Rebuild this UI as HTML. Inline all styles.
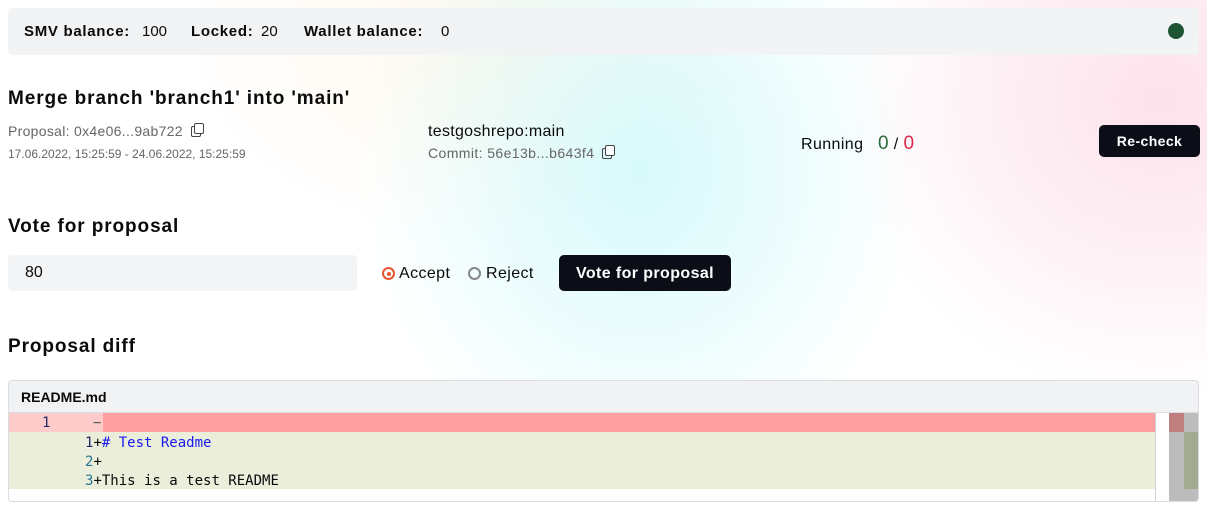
<!DOCTYPE html>
<html><head><style>
*{box-sizing:border-box;margin:0;padding:0}
body{width:1207px;height:513px;overflow:hidden;font-family:"Liberation Sans",sans-serif;color:#0a0a0a;position:relative;
background:
radial-gradient(ellipse 280px 320px at 640px 170px, rgba(205,248,250,0.8), rgba(255,255,255,0) 100%),
radial-gradient(ellipse 320px 300px at 1160px 100px, rgba(252,218,230,0.8), rgba(255,255,255,0) 100%),
radial-gradient(ellipse 300px 200px at 480px 40px, rgba(255,242,220,0.5), rgba(255,255,255,0) 100%),
#fff;}
.abs{position:absolute;white-space:nowrap}
.bar{left:8px;top:8px;width:1191px;height:47px;background:#f2f3f5;border-radius:4px}
.bar span{position:absolute;top:15px;font-size:15px}
b{font-weight:bold;letter-spacing:0.7px}
.h{font-weight:bold;font-size:19px;letter-spacing:0.9px}
.grey{color:#666}
.btn{background:#0b0e17;color:#fff;font-weight:bold;border-radius:5px;text-align:center;letter-spacing:0.4px}
.copy{display:inline-block;width:10px;height:11px;border:1.5px solid #444;border-radius:2px;position:relative;margin-left:8px;vertical-align:-1px;letter-spacing:0}
.copy:after{content:"";position:absolute;left:2px;top:-4px;width:8px;height:9px;border:1.5px solid #444;border-radius:2px;background:#fff}
.mono{font-family:"DejaVu Sans Mono","Liberation Mono",monospace;font-size:14px}
</style></head><body>
<div class="abs bar">
<span style="left:16px"><b>SMV balance:</b></span><span style="left:134px">100</span>
<span style="left:183px"><b>Locked:</b></span><span style="left:253px">20</span>
<span style="left:296px"><b>Wallet balance:</b></span><span style="left:433px">0</span>
<div class="abs" style="left:1160px;top:15px;width:16px;height:16px;border-radius:50%;background:#1d5532"></div>
</div>
<div class="abs h" style="left:8px;top:88px">Merge branch 'branch1' into 'main'</div>
<div class="abs grey" style="left:8px;top:123px;font-size:14px;letter-spacing:0.3px">Proposal: 0x4e06...9ab722<span class="copy"></span></div>
<div class="abs grey" style="left:8px;top:147px;font-size:12px">17.06.2022, 15:25:59 - 24.06.2022, 15:25:59</div>
<div class="abs" style="left:428px;top:123px;font-size:16px;letter-spacing:0.3px">testgoshrepo:main</div>
<div class="abs grey" style="left:428px;top:145px;font-size:14px;letter-spacing:0.4px">Commit: 56e13b...b643f4<span class="copy"></span></div>
<div class="abs" style="left:801px;top:133px;font-size:16px;letter-spacing:0.4px">Running &nbsp;&nbsp;<span style="font-size:19px;color:#2a6b3a">0</span> / <span style="font-size:19px;color:#e0284a">0</span></div>
<div class="abs btn" style="left:1099px;top:125px;width:101px;height:32px;line-height:32px;font-size:14px">Re-check</div>
<div class="abs h" style="left:8px;top:216px">Vote for proposal</div>
<div class="abs" style="left:8px;top:255px;width:349px;height:36px;background:#f3f4f5;border-radius:4px;font-size:16px;line-height:36px;padding-left:17px">80</div>
<div class="abs" style="left:382px;top:267px;width:13px;height:13px;border:2px solid #e8542d;border-radius:50%"><div style="margin:2.5px;width:4px;height:4px;background:#e8542d;border-radius:50%"></div></div>
<div class="abs" style="left:399px;top:265px;font-size:16px;letter-spacing:0.4px">Accept</div>
<div class="abs" style="left:468px;top:267px;width:13px;height:13px;border:2px solid #888;border-radius:50%"></div>
<div class="abs" style="left:486px;top:265px;font-size:16px;letter-spacing:0.4px">Reject</div>
<div class="abs btn" style="left:559px;top:255px;width:172px;height:36px;line-height:37px;font-size:16px">Vote for proposal</div>
<div class="abs h" style="left:8px;top:336px">Proposal diff</div>
<div class="abs" style="left:8px;top:380px;width:1191px;height:122px;border:1px solid #dcdde0;border-radius:4px;background:#fff;overflow:hidden">
<div style="height:32px;background:#f1f2f4;border-bottom:1px solid #dcdde0;font-weight:bold;font-size:14px;line-height:32px;padding-left:12px">README.md</div>
<div style="position:absolute;top:32px;left:0;width:1146px;height:19px;background:#ffa0a0"></div>
<div style="position:absolute;top:32px;left:0;width:94px;height:19px;background:#fecbcb"></div>
<div style="position:absolute;top:51px;left:0;width:1146px;height:57px;background:#eaeedb"></div>
<div class="mono" style="position:absolute;top:33px;left:33px;color:#222a66;line-height:19px">1</div>
<div class="mono" style="position:absolute;top:33px;left:84px;color:#555;line-height:19px">−</div>
<div class="mono" style="position:absolute;top:53px;left:76px;line-height:19px"><span style="color:#222a66">1</span>+<span style="color:#1a1aee"># Test Readme</span><br><span style="color:#237893">2</span>+<br><span style="color:#237893">3</span>+This is a test README</div>
<div style="position:absolute;top:32px;left:1146px;width:1px;height:90px;background:#d0d0d0"></div>
<div style="position:absolute;top:32px;left:1160px;width:31px;height:90px;background:#bcbcbc"></div>
<div style="position:absolute;top:32px;left:1160px;width:15px;height:19px;background:#c07f7f"></div>
<div style="position:absolute;top:51px;left:1175px;width:15px;height:57px;background:#a2ab8f"></div>
</div>
</body></html>
